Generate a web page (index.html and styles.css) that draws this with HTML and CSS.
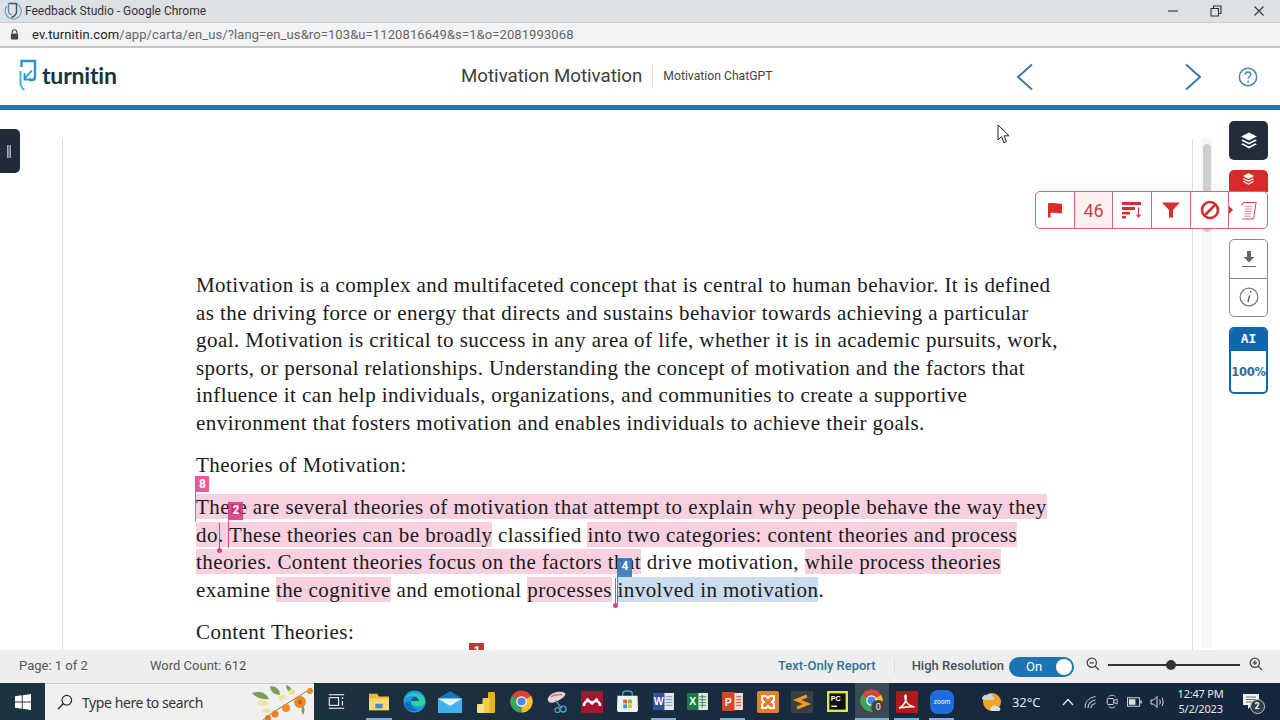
FILE: index.html
```html
<!DOCTYPE html>
<html lang="en">
<head>
<meta charset="utf-8">
<title>Feedback Studio - Google Chrome</title>
<link rel="stylesheet" href="styles.css">
</head>
<body>
<svg class="defs" width="0" height="0" aria-hidden="true">
  <symbol id="layers" viewBox="0 0 16 16">
    <path d="M8 .8 15 4.4 8 8 1 4.4Z" fill="currentColor"/>
    <path d="M2.6 7 8 9.9 13.4 7 15 7.9 8 11.5 1 7.9Z" fill="currentColor"/>
    <path d="M2.6 10.5 8 13.4 13.4 10.5 15 11.4 8 15 1 11.4Z" fill="currentColor"/>
  </symbol>
  <symbol id="chrome" viewBox="0 0 24 24">
    <circle cx="12" cy="12" r="11.5" fill="#db4437"/>
    <path d="M12 12 22 6.2A11.5 11.5 0 0 1 12 23.5Z" fill="#fbc02d"/>
    <path d="M12 12 12 23.5A11.5 11.5 0 0 1 2 6.2Z" fill="#3aa757"/>
    <circle cx="12" cy="12" r="5.6" fill="#fff"/>
    <circle cx="12" cy="12" r="4.3" fill="#4a8af0"/>
  </symbol>
</svg>

<header class="titlebar">
  <svg class="favicon" viewBox="0 0 18 18" width="18" height="18"><path d="M12 1.500A8 8 0 1 1 3 4" fill="none" stroke="#6e9cc0" stroke-width="1.200"/><path d="M4.500 1.500h8v8c0 3.500-2.500 5-5 6" fill="none" stroke="#2f5877" stroke-width="1.400"/><path d="M4.500 1.500v7c0 2.500 1.500 4 3.500 4" fill="none" stroke="#5f87a6" stroke-width="1.200"/></svg>
  <span class="titlebar-text">Feedback Studio - Google Chrome</span>
  <div class="window-controls">
    <span class="win-btn"><svg viewBox="0 0 12 12" width="12" height="12"><path d="M1 6h10" stroke="#333" stroke-width="1.100"/></svg></span>
    <span class="win-btn"><svg viewBox="0 0 12 12" width="12" height="12"><path d="M1 3.500h7.500V11H1ZM3.500 3.500V1H11v7.500H8.500" fill="none" stroke="#333" stroke-width="1.100"/></svg></span>
    <span class="win-btn"><svg viewBox="0 0 12 12" width="12" height="12"><path d="M1.500 1.500l9 9M10.500 1.500l-9 9" stroke="#333" stroke-width="1.100"/></svg></span>
  </div>
</header>

<div class="addressbar">
  <svg class="lock" viewBox="0 0 10 12" width="9" height="11"><path d="M2.400 5V3.300a2.600 2.600 0 0 1 5.200 0V5" fill="none" stroke="#444" stroke-width="1.200"/><rect x="1" y="5" width="8" height="6.500" rx="1" fill="#444"/></svg>
  <span class="url"><span class="url-host">ev.turnitin.com</span>/app/carta/en_us/?lang=en_us&amp;ro=103&amp;u=1120816649&amp;s=1&amp;o=2081993068</span>
</div>

<nav class="apphead">
  <div class="logo">
    <svg viewBox="0 0 20 32" width="20" height="32"><path d="M3.500 8V2h13.500v16c0 2-1 3-3 3H11" fill="none" stroke="#2a95d0" stroke-width="2.400"/><path d="M14 11.500 6.500 19.500M6.500 14V20.500H13" fill="none" stroke="#2a95d0" stroke-width="1.800"/><path d="M2.500 12V24c0 3 1.500 5.500 4 7" fill="none" stroke="#3fa7dc" stroke-width="1.800"/></svg>
    <span class="logo-word">turnitin</span>
  </div>
  <div class="doc-title">Motivation Motivation</div>
  <div class="doc-sub">Motivation ChatGPT</div>
  <div class="nav-actions">
    <svg class="chev" viewBox="0 0 18 28" width="18" height="28"><path d="M16 1.500 2 14l14 12.500" fill="none" stroke="#3f78a6" stroke-width="2"/></svg>
    <svg class="chev chev-next" viewBox="0 0 18 28" width="18" height="28"><path d="M2 1.500 16 14 2 26.500" fill="none" stroke="#3f78a6" stroke-width="2"/></svg>
    <svg class="help" viewBox="0 0 20 20" width="20" height="20"><circle cx="10" cy="10" r="8.700" fill="none" stroke="#4f83ad" stroke-width="1.500"/><path d="M7.300 7.800c0-1.700 1.200-2.700 2.800-2.700s2.700 1 2.700 2.400c0 2-2.700 2-2.700 4.200" fill="none" stroke="#4f83ad" stroke-width="1.500"/><circle cx="10.100" cy="14.600" r="1" fill="#4f83ad"/></svg>
  </div>
</nav>
<div class="accent"></div>

<main class="workspace">
  <div class="drawer-handle"><span class="grip"></span></div>

  <article class="page">
    <div class="para">
      <div class="line">Motivation is a complex and multifaceted concept that is central to human behavior. It is defined</div>
      <div class="line">as the driving force or energy that directs and sustains behavior towards achieving a particular</div>
      <div class="line">goal. Motivation is critical to success in any area of life, whether it is in academic pursuits, work,</div>
      <div class="line">sports, or personal relationships. Understanding the concept of motivation and the factors that</div>
      <div class="line">influence it can help individuals, organizations, and communities to create a supportive</div>
      <div class="line">environment that fosters motivation and enables individuals to achieve their goals.</div>
    </div>
    <div class="para"><div class="line">Theories of Motivation:</div></div>
    <div class="para marked">
      <div class="line"><span class="hl">There are several theories of motivation that attempt to explain why people behave the way they</span></div>
      <div class="line"><span class="hl">do. These theories can be broadly</span> classified <span class="hl">into two categories: content theories and process</span></div>
      <div class="line"><span class="hl">theories. Content theories focus on the factors that</span> drive motivation, <span class="hl">while process theories</span></div>
      <div class="line">examine <span class="hl">the cognitive</span> and emotional <span class="hl">processes</span> <span class="hl hl-blue">involved in motivation</span>.</div>

      <span class="flag flag-8">8</span>
      <span class="flag flag-2">2</span>
      <span class="flag flag-4">4</span>
      <span class="pin pin-do"></span>
      <span class="pin pin-proc"></span>
    </div>
    <div class="para marked">
      <div class="line">Content Theories:</div>
      <span class="flag flag-1">1</span>
    </div>
  </article>

  <div class="scroll-track"><div class="scroll-thumb"></div></div>

  <aside class="rail">
    <div class="rail-btn rail-dark"><svg width="18" height="19"><use href="#layers"/></svg></div>
    <div class="rail-cap"><svg width="13" height="14"><use href="#layers"/></svg></div>
    <div class="rail-group">
      <div class="rail-cell">
        <svg viewBox="0 0 16 18" width="16" height="18"><path d="M6 1h4v6h3.500L8 12.500 2.500 7H6Z" fill="#666"/><path d="M1 16.500h14" stroke="#666" stroke-width="1"/></svg>
      </div>
      <div class="rail-cell">
        <svg viewBox="0 0 20 20" width="20" height="20"><circle cx="10" cy="10" r="8.900" fill="none" stroke="#777" stroke-width="1.200"/><path d="M11 4.800h1.300M10.600 8.300 9 15" stroke="#666" stroke-width="1.500" fill="none"/></svg>
      </div>
    </div>
    <div class="ai-card">
      <div class="ai-top">AI</div>
      <div class="ai-score">100%</div>
    </div>
  </aside>

  <div class="toolbar">
    <div class="tool">
      <svg viewBox="0 0 16 16" width="16" height="16"><path d="M1 1.500c4-1.500 9 1 14 0v9.500c-4 1-8-1-11.500 0V15.500H1Z" fill="#dd2c2c"/></svg>
    </div>
    <div class="tool tool-count">46</div>
    <div class="tool">
      <svg viewBox="0 0 20 18" width="20" height="18"><path d="M0 1h19v3H0ZM0 6h13v3H0ZM0 11h8v2.500H0ZM0 15h4v2.500H0Z" fill="#dd2c2c"/><path d="M16.500 6.500v9.500M14.500 13.500l2 2.500 2-2.500" fill="none" stroke="#dd2c2c" stroke-width="1.200"/></svg>
    </div>
    <div class="tool">
      <svg viewBox="0 0 18 16" width="18" height="16"><path d="M0 .5h18L11 8v7.500H7V8Z" fill="#dd2c2c"/></svg>
    </div>
    <div class="tool">
      <svg viewBox="0 0 20 20" width="20" height="20"><circle cx="10" cy="10" r="8" fill="none" stroke="#cf2f32" stroke-width="2.600"/><path d="M4.500 15.500 15.500 4.500" stroke="#cf2f32" stroke-width="2.600"/></svg>
    </div>
    <div class="tool tool-doc">
      <span class="tool-caret"></span>
      <svg viewBox="0 0 18 20" width="17" height="19"><path d="M1.500 4 4 1.500h13l-2.500 16.500-1.500 1H2.500" fill="none" stroke="#c9494f" stroke-width="1.100"/><path d="M5 6h8M5 8.500h8M4.500 11h8M4.500 13.500h7.500M4 16h7" stroke="#d0878a" stroke-width="1" fill="none"/></svg>
    </div>
  </div>

  <svg class="mouse" viewBox="0 0 13 20" width="13" height="20"><path d="M1 1v15l3.600-3.400 2.400 6 2.600-1-2.500-5.800h5Z" fill="#fff" stroke="#222" stroke-width="1"/></svg>
</main>

<footer class="statusbar">
  <span class="stat stat-page">Page: 1 of 2</span>
  <span class="stat">Word Count: 612</span>
  <div class="status-right">
    <span class="report-link">Text-Only Report</span>
    <span class="status-sep"></span>
    <span class="hires">High Resolution</span>
    <span class="toggle"><span class="toggle-label">On</span><span class="toggle-knob"></span></span>
    <svg class="zoom-icon zoom-out" viewBox="0 0 14 14" width="14" height="14"><circle cx="5.800" cy="5.800" r="4.600" fill="none" stroke="#444" stroke-width="1.300"/><path d="M3.600 5.800h4.400M9.200 9.200l3.800 3.800" stroke="#444" stroke-width="1.300"/></svg>
    <span class="slider"><span class="slider-knob"></span></span>
    <svg class="zoom-icon" viewBox="0 0 14 14" width="14" height="14"><circle cx="5.800" cy="5.800" r="4.600" fill="none" stroke="#444" stroke-width="1.300"/><path d="M3.600 5.800h4.400M5.800 3.600v4.400M9.200 9.200l3.800 3.800" stroke="#444" stroke-width="1.300"/></svg>
  </div>
</footer>

<div class="taskbar">
  <div class="start">
    <svg viewBox="0 0 16 16" width="16" height="16"><path d="M0 2.300 6.800 1.300V7.600H0ZM7.700 1.200 16 0V7.600H7.700ZM0 8.400H6.800V14.700L0 13.700ZM7.700 8.400H16V16L7.700 14.800Z" fill="#fff"/></svg>
  </div>
  <div class="search">
    <svg viewBox="0 0 16 16" width="16" height="16"><circle cx="9.800" cy="6.200" r="4.800" fill="none" stroke="#222" stroke-width="1.200"/><path d="M6.300 9.700 1 15" stroke="#222" stroke-width="1.300"/></svg>
    <span class="search-text">Type here to search</span>
    <svg class="flowers" viewBox="0 0 64 37" width="64" height="37">
      <path d="M12 37C22 28 40 18 62 4" fill="none" stroke="#8a7b3a" stroke-width="1"/>
      <path d="M2 9c8-3 14 0 17 6-7 1-13-1-17-6ZM20 2c7 0 10 4 10 9-6 0-10-4-10-9ZM36 1c4 1 6 4 6 7-5 0-6-4-6-7ZM53 21c2 3 2 7 0 10-2-3-2-7 0-10Z" fill="#7d9f58"/>
      <path d="M6 18c5-3 11-2 13 2-4 3-10 2-13-2ZM12 27c3-3 7-3 9-1-2 4-6 4-9 1ZM28 12l7-2 1 5-6 2Z" fill="#eee3a0"/>
      <circle cx="50" cy="18" r="6" fill="#ee8a2c"/><circle cx="36" cy="24" r="4" fill="#ee8a2c"/><circle cx="25" cy="30" r="3.500" fill="#e9812a"/><circle cx="60" cy="7" r="3" fill="#ec8a34"/><circle cx="18" cy="34" r="3" fill="#e07a2c"/>
      <circle cx="42" cy="8" r="3" fill="#eee08a"/><circle cx="50" cy="18" r="2.200" fill="#c8601c"/>
    </svg>
  </div>

  <div class="apps">
    <span class="app app-task"><svg viewBox="0 0 20 20" width="17" height="17"><path d="M1 2h18M1 18h18" stroke="#fff" stroke-width="1.300"/><rect x="1.500" y="5.500" width="11" height="9" fill="none" stroke="#fff" stroke-width="1.200"/><path d="M17 5v2M17 9.500v5" stroke="#fff" stroke-width="1.500"/></svg></span>
    <span class="app app-open"><svg viewBox="0 0 24 22" width="22" height="20"><path d="M1 2h9l2 3h11v15H1Z" fill="#eeb92f"/><path d="M1 7h22v13H1Z" fill="#f7d774"/><rect x="8" y="13" width="8" height="5" fill="#4b86c4"/></svg></span>
    <span class="app"><svg viewBox="0 0 24 24" width="23" height="23"><circle cx="12" cy="12" r="11.500" fill="#1b9de2"/><path d="M23.500 13C23 7 18 3 12 3 5 3 1 8 .5 13c1-5 5-7 9-7 5 0 7 3 7 5.500H8c0 3.500 3 5.500 7 5.500 3 0 6-1 8-3" fill="#2fd0a0"/><path d="M8 11.500h8.500C16.500 9 14 7 11.500 7 9.500 7 8.500 9.500 8 11.500Z" fill="#0c5aa8"/><path d="M8 12c0 5 4 8 8 8-4 3-11 3-14-3-1-3 2-6 6-5Z" fill="#0f6cbd"/></svg></span>
    <span class="app"><svg viewBox="0 0 24 22" width="24" height="22"><path d="M12 0 24 7.500H0Z" fill="#1676bd"/><path d="M0 7.500h24V22H0Z" fill="#3fb1ee"/><path d="M0 7.500 12 15 24 7.500" fill="#dff3fd"/></svg></span>
    <span class="app"><svg viewBox="0 0 18 22" width="18" height="22"><rect x="11" y="1" width="7" height="21" rx="1" fill="#e9b21c"/><rect x="5.500" y="7" width="7" height="15" rx="1" fill="#f4cc45"/><rect x="0" y="13" width="7" height="9" rx="1" fill="#f9e08c"/></svg></span>
    <span class="app"><svg width="23" height="23"><use href="#chrome"/></svg></span>
    <span class="app"><svg viewBox="0 0 24 24" width="23" height="23"><path d="M3 9C5 3 15 0 21 3c2 3-6 8-12 10C6 14 2 12 3 9Z" fill="#e7d3d8"/><path d="M6 7c4-2 8-3 12-2" stroke="#d06a7d" stroke-width="1.500" fill="none"/><path d="M11 11l6 8" stroke="#5f93ad" stroke-width="1.500"/><circle cx="19" cy="20" r="3" fill="none" stroke="#4f9cc6" stroke-width="1.500"/><circle cx="13" cy="21" r="2.500" fill="none" stroke="#4f9cc6" stroke-width="1.300"/></svg></span>
    <span class="app"><svg viewBox="0 0 22 22" width="22" height="22"><rect width="22" height="22" rx="1.500" fill="#a4162e"/><path d="M3 15c0-3 2-5 4-5s2 1.500 4 1.500S13 10 15 10s4 2 4 5" fill="none" stroke="#fff" stroke-width="2.600"/><circle cx="6.500" cy="9" r="1.800" fill="#fff"/><circle cx="15.500" cy="9" r="1.800" fill="#fff"/><circle cx="11" cy="12" r="1.800" fill="#fff"/></svg></span>
    <span class="app"><svg viewBox="0 0 24 24" width="23" height="23"><path d="M7 6V3.500C7 1.500 9 1 12 1s5 .5 5 2.500V6" fill="none" stroke="#35a0d8" stroke-width="1.500"/><path d="M1.500 6h21L23 20c0 2-1 3-3 3H4c-2 0-3-1-3-3Z" fill="#eef3f5"/><rect x="7.500" y="10" width="4" height="4" fill="#e7572b"/><rect x="12.500" y="10" width="4" height="4" fill="#7fb82a"/><rect x="7.500" y="15" width="4" height="4" fill="#1f9be0"/><rect x="12.500" y="15" width="4" height="4" fill="#fbbc0a"/></svg></span>
    <span class="app app-open"><svg viewBox="0 0 22 20" width="21" height="19"><rect x="9" y="1" width="13" height="18" fill="#dfe7f2"/><path d="M13 5h7M13 8h7M13 11h7M13 14h7" stroke="#7c94bb" stroke-width="1"/><rect x="0" y="1" width="12" height="18" fill="#2b579a"/><text class="app-letter" x="6" y="14">W</text></svg></span>
    <span class="app"><svg viewBox="0 0 22 20" width="21" height="19"><rect x="9" y="1" width="13" height="18" fill="#dcece2"/><path d="M13 5h7M13 8h7M13 11h7M13 14h7M16 3v14" stroke="#3d8a5f" stroke-width="1"/><rect x="0" y="1" width="12" height="18" fill="#1d7a46"/><text class="app-letter" x="6" y="14">X</text></svg></span>
    <span class="app app-open"><svg viewBox="0 0 22 20" width="21" height="19"><rect x="9" y="1" width="13" height="18" fill="#f7dcd4"/><path d="M15 5h5M15 8h5M15 11h5M15 14h5" stroke="#c9472a" stroke-width="1"/><rect x="0" y="0" width="13" height="20" fill="#d24726"/><text class="app-letter" x="6.500" y="14.500">P</text></svg></span>
    <span class="app"><svg viewBox="0 0 22 22" width="22" height="22"><rect width="22" height="22" rx="2" fill="#e0812f"/><path d="M5 5h4l2 2 2-2h4v4l-2 2 2 2v4h-4l-2-2-2 2H5v-4l2-2-2-2Z" fill="none" stroke="#fff" stroke-width="2"/></svg></span>
    <span class="app"><svg viewBox="0 0 22 22" width="22" height="22"><rect width="22" height="22" rx="1" fill="#3c3f41"/><path d="M16 5 6 9l10 4-10 4" fill="none" stroke="#f29a1f" stroke-width="3"/></svg></span>
    <span class="app"><svg viewBox="0 0 22 22" width="21" height="21"><rect width="22" height="22" fill="#d6e84a"/><rect x="2.500" y="2.500" width="17" height="17" fill="#111"/><text class="pc-letter" x="4" y="10.500">PC</text><path d="M4.500 16h6" stroke="#fff" stroke-width="1.500"/></svg></span>
    <span class="app app-active"><svg width="23" height="23"><use href="#chrome"/></svg><span class="app-count">0</span></span>
    <span class="app app-open"><svg viewBox="0 0 22 22" width="22" height="22"><rect width="22" height="22" rx="1" fill="#b01a1a"/><path d="M3 17c3-1 6-5 7-9 .4-2 .2-4-.5-4s-1 2 0 5c1 3 4 6 9 7-3-.5-9 0-15.500 1Z" fill="none" stroke="#fff" stroke-width="1.400"/></svg></span>
    <span class="app app-open"><svg viewBox="0 0 24 24" width="24" height="24"><rect width="24" height="24" rx="8" fill="#1f6ce0"/><text class="zoom-letter" x="12" y="14">zoom</text></svg></span>
  </div>

  <div class="tray">
    <svg class="weather" viewBox="0 0 24 24" width="24" height="24"><circle cx="12" cy="12" r="9" fill="#f2a227"/><path d="M2 9c0-3 3-5 5.500-4C9 3 13 3.500 13 7c2 .5 2 3 0 3H3Z" fill="#c9d6e2"/><path d="M12 21c-2 0-2.500-3-.5-3.500C12 15 16 15 17 17c2.500-1 5 3 2 4Z" fill="#d7e2ec"/></svg>
    <span class="temp">32°C</span>
    <svg class="tray-chev" viewBox="0 0 12 8" width="12" height="8"><path d="M1 7 6 1.500 11 7" fill="none" stroke="#eee" stroke-width="1.200"/></svg>
    <svg class="tray-icon" viewBox="0 0 14 14" width="14" height="14"><path d="M2 13C2 7 6 2.500 12.500 1.500M5 13c0-4 3-7 7.500-8M8 13c0-2 2-4 4.500-4.500" fill="none" stroke="#ccc" stroke-width="1.100"/></svg>
    <svg class="tray-icon" viewBox="0 0 14 18" width="12" height="17"><path d="M3 3.500C5 1 9 1 11 3.500M3 14.500c2 2.500 6 2.500 8 0" fill="none" stroke="#ddd" stroke-width="1"/><rect x="1.500" y="5.500" width="7.500" height="7" rx="1" fill="none" stroke="#ddd" stroke-width="1.100"/><path d="M9 8l4-2v6l-4-2" fill="none" stroke="#ddd" stroke-width="1"/></svg>
    <svg class="tray-icon" viewBox="0 0 16 10" width="15" height="10"><rect x=".5" y=".5" width="13" height="9" fill="none" stroke="#ddd"/><rect x="2" y="2" width="7" height="6" fill="#ddd"/><path d="M15 3.500v3" stroke="#ddd" stroke-width="1.500"/></svg>
    <svg class="tray-icon tray-vol" viewBox="0 0 16 14" width="16" height="14"><path d="M1 5h2.500L7 1.500v11L3.500 9H1Z" fill="none" stroke="#ddd"/><path d="M9.500 4.500c1 1.500 1 3.500 0 5M12 3c1.500 2.500 1.500 5.500 0 8" fill="none" stroke="#ddd"/></svg>
    <div class="clock"><span>12:47 PM</span><span>5/2/2023</span></div>
    <span class="notify">
      <svg viewBox="0 0 16 16" width="16" height="16"><path d="M0 0h16v11H9l-4 4v-4H0Z" fill="#f1f1f1"/><path d="M3 3h10M3 5.500h10M3 8h6" stroke="#777" stroke-width="1"/></svg>
      <span class="notify-badge">2</span>
    </span>
  </div>
</div>
</body>
</html>
```
FILE: styles.css
```css
* { box-sizing: border-box; }
html, body { margin: 0; height: 100%; overflow: hidden; }
body {
  width: 1280px;
  height: 720px;
  display: flex;
  flex-direction: column;
  background: #fff;
  font-family: "Roboto", "Liberation Sans", sans-serif;
}
.defs { position: absolute; }

/* window chrome */
.titlebar {
  height: 22px;
  flex: none;
  display: flex;
  align-items: center;
  padding-left: 4px;
  background: #dee1e4;
}
.favicon { flex: none; }
.titlebar-text {
  margin-left: 3px;
  font: 12px "Roboto", "Open Sans", sans-serif;
  color: #333;
}
.window-controls { margin-left: auto; display: flex; }
.win-btn { width: 43px; display: flex; justify-content: center; align-items: center; }
.addressbar {
  height: 26px;
  flex: none;
  display: flex;
  align-items: center;
  padding-left: 10px;
  background: #f1f3f4;
  border-top: 1px solid #c9cbce;
  border-bottom: 2px solid #c3c5c7;
}
.url {
  margin-left: 13px;
  font: 13px "Roboto", sans-serif;
  color: #666;
  letter-spacing: .1px;
}
.url-host { color: #222; }

/* app header */
.apphead {
  height: 57px;
  flex: none;
  display: flex;
  align-items: center;
  padding-left: 18px;
  background: #fff;
}
.logo { width: 100px; display: flex; align-items: center; gap: 4px; margin-top: -3px; }
.logo-word {
  font: 700 23px "Lato", sans-serif;
  color: #16333f;
  letter-spacing: -.2px;
}
.doc-title {
  margin: 0 0 2px 343px;
  font-size: 18.700px;
  color: #3a3f44;
  padding-right: 10px;
  border-right: 1px solid #ddd;
  line-height: 22px;
}
.doc-sub { margin: 0 0 2px 10px; font-size: 12.200px; color: #444; }
.nav-actions { margin-left: auto; display: flex; align-items: center; padding-right: 22px; }
.chev-next { margin-left: 150px; }
.help { margin-left: 36px; }
.accent { height: 5px; flex: none; background: #2a76ae; }

/* workspace */
.workspace {
  position: relative;
  height: 540px;
  flex: none;
  display: flex;
  align-items: flex-start;
  padding-left: 62px;
  overflow: hidden;
  background: #fff;
}
.drawer-handle {
  position: absolute;
  left: 0;
  top: 19px;
  width: 20px;
  height: 44px;
  display: flex;
  align-items: center;
  padding-left: 7px;
  background: #212b38;
  border-radius: 0 5px 5px 0;
}
.grip {
  width: 4px;
  height: 13px;
  border-left: 1px solid #aab;
  border-right: 1px solid #aab;
  background: #778;
}
.page {
  width: 1131px;
  height: 540px;
  flex: none;
  margin-top: 29px;
  padding: 133px 0 0 133px;
  border-left: 1px solid #dedede;
  border-right: 1px solid #dedede;
  font: 21px/27.500px "Liberation Serif", "Times New Roman", serif;
  color: #1a1a1a;
}
.para { margin-bottom: 14.750px; }
.marked { position: relative; }
.line { white-space: nowrap; letter-spacing: .44px; }
.hl { background: #f8d0e0; padding: 1px 0 0; }
.hl-blue { background: #cadced; }

.flag {
  position: absolute;
  width: 14px;
  color: #fff;
  font: 700 12px/17px "Roboto", sans-serif;
  text-align: center;
}
.flag::before {
  content: "";
  position: absolute;
  left: -1px;
  top: 0;
  width: 1px;
  height: 46px;
  background: inherit;
}
.flag-8 { left: 0; top: -18px; height: 16px; width: 13px; background: rgba(232, 72, 140, .9); }
.flag-2 { left: 33px; top: 8px; height: 18px; background: rgba(217, 50, 124, .85); }
.flag-4 { left: 422px; top: 64px; height: 19px; background: rgba(52, 120, 186, .9); }
.flag-1 { left: 274px; top: 24px; height: 18px; background: #c73434; }
.pin {
  position: absolute;
  width: 1px;
  height: 27px;
  background: #d8457f;
}
.pin::after {
  content: "";
  position: absolute;
  left: -2px;
  bottom: -3px;
  width: 5px;
  height: 5px;
  border-radius: 50%;
  background: #d8457f;
}
.pin-do { left: 23px; top: 29px; }
.pin-proc { left: 419px; top: 84px; }

.scroll-track {
  width: 11px;
  height: 510px;
  flex: none;
  margin: 29px 0 0 8px;
  padding: 5px 1px 0 2px;
  background: #f7f7f7;
}
.scroll-thumb { height: 88px; background: #cfcfcf; border-radius: 4px; }

.rail {
  width: 39px;
  flex: none;
  margin: 11px 0 0 17px;
  display: flex;
  flex-direction: column;
}
.rail-btn { display: flex; align-items: center; justify-content: center; }
.rail-dark {
  height: 39px;
  color: #fff;
  background: #222c3b;
  border-radius: 5px;
}
.rail-cap {
  height: 22px;
  margin-top: 10px;
  margin-bottom: 47px;
  padding-bottom: 4px;
  display: flex;
  align-items: center;
  justify-content: center;
  color: #fff;
  background: #d92a2a;
  border-radius: 5px 5px 0 0;
}
.rail-group {
  height: 78px;
  margin-bottom: 10px;
  border: 1px solid #8a8a8a;
  border-radius: 5px;
  display: flex;
  flex-direction: column;
  background: #fff;
}
.rail-cell { flex: 1; display: flex; align-items: center; justify-content: center; }
.rail-cell + .rail-cell { border-top: 1px solid #8a8a8a; }
.ai-card {
  height: 67px;
  border: 2px solid #1566aa;
  border-radius: 5px;
  overflow: hidden;
  background: #fff;
}
.ai-top {
  height: 22px;
  background: #0f66b0;
  color: #fff;
  text-align: center;
  font: 700 13px/19px "DejaVu Sans Mono", monospace;
}
.ai-score {
  height: 41px;
  display: flex;
  align-items: center;
  justify-content: center;
  font: 700 11.500px "DejaVu Sans", sans-serif;
  letter-spacing: -.2px;
  color: #2a6a9e;
  white-space: nowrap;
}

.toolbar {
  position: absolute;
  left: 1035px;
  top: 81px;
  width: 233px;
  height: 38px;
  display: flex;
  border: 1px solid #d9666c;
  border-radius: 5px;
  background: #fff;
}
.tool {
  flex: 1;
  position: relative;
  display: flex;
  align-items: center;
  justify-content: center;
}
.tool + .tool { border-left: 1px solid #d9666c; }
.tool-count { background: #fdf0ef; color: #c04449; font-size: 18px; }
.tool-caret {
  position: absolute;
  left: 0;
  top: 14px;
  border-left: 4px solid #c0392b;
  border-top: 4px solid transparent;
  border-bottom: 4px solid transparent;
}
.mouse { position: absolute; left: 997px; top: 14px; }

/* status */
.statusbar {
  height: 33px;
  flex: none;
  display: flex;
  align-items: center;
  padding: 0 0 2px 19px;
  background: #eeeeee;
  font-size: 13px;
  color: #555;
}
.stat-page { width: 131px; }
.status-right { margin-left: auto; display: flex; align-items: center; padding-right: 17px; }
.report-link { font-weight: 500; color: #2f7199; }
.status-sep { width: 1px; height: 16px; margin: 0 17px 0 18px; background: #ddd; }
.hires { font-weight: 500; color: #4a4f55; }
.toggle {
  width: 65px;
  height: 20px;
  margin: 2px 0 0 5px;
  padding: 0 2px 0 17px;
  display: flex;
  align-items: center;
  justify-content: space-between;
  border-radius: 10px;
  background: #1b75b5;
  color: #fff;
  font-size: 13px;
}
.toggle-knob { width: 16px; height: 16px; border-radius: 50%; background: #fff; }
.zoom-out { margin-left: 12px; }
.slider {
  position: relative;
  width: 132px;
  height: 2px;
  margin: -2px 9px 0 8px;
  background: #333;
}
.slider-knob {
  position: absolute;
  left: 58px;
  top: -4px;
  width: 10px;
  height: 10px;
  border-radius: 50%;
  background: #333;
}
.zoom-icon { margin-top: -3px; }

/* taskbar */
.taskbar {
  height: 37px;
  flex: none;
  display: flex;
  align-items: stretch;
  background: linear-gradient(90deg, #1d3340, #15263c);
}
.start { width: 45px; display: flex; align-items: center; justify-content: center; background: #1d3340; }
.search {
  width: 269px;
  display: flex;
  align-items: center;
  padding-left: 12px;
  background: #f0f0f0;
  border-top: 1px solid #ccc;
  overflow: hidden;
}
.search-text { margin-left: 9px; font: 14px "Noto Sans", "Open Sans", sans-serif; color: #333; letter-spacing: -.42px; white-space: nowrap; }
.flowers { margin-left: auto; flex: none; }
.apps { margin-left: 5px; display: flex; }
.app {
  position: relative;
  width: 35.600px;
  display: flex;
  align-items: center;
  justify-content: center;
}
.app-task { width: 42px; justify-content: flex-start; padding-left: 9px; }
.app:nth-child(n+10) { width: 34.800px; }
.app-open::after {
  content: "";
  position: absolute;
  left: 5px;
  right: 5px;
  bottom: 0;
  height: 2px;
  background: #7fb0dc;
}
.app-active { background: #3c4a55; border-bottom: 2px solid #7fb0dc; }
.app-count {
  position: absolute;
  right: 4px;
  bottom: 4px;
  width: 14px;
  height: 14px;
  border-radius: 50%;
  background: #444;
  color: #fff;
  font: 9px/14px "Roboto", sans-serif;
  text-align: center;
}
.app-letter { font: 700 11px "Liberation Sans", sans-serif; fill: #fff; text-anchor: middle; }
.pc-letter { font: 700 7.500px "Liberation Sans", sans-serif; fill: #fff; }
.zoom-letter { font: 6.500px "Roboto", sans-serif; fill: #fff; text-anchor: middle; }
.tray {
  flex: 1;
  display: flex;
  align-items: center;
  padding-left: 21px;
  color: #e8e8e8;
}
.temp { margin-left: 8px; font: 13px "Noto Sans", sans-serif; }
.tray-chev { margin-left: 21px; }
.tray-icon { margin-left: 9px; }
.tray-vol { margin-left: 8px; }
.clock {
  margin: -2px 0 0 12px;
  display: flex;
  flex-direction: column;
  align-items: center;
  font: 11px/15px "Noto Sans", sans-serif;
  letter-spacing: -.2px;
}
.notify { position: relative; margin-left: 19px; display: flex; }
.notify-badge {
  position: absolute;
  left: 7px;
  top: 5px;
  width: 15px;
  height: 15px;
  border-radius: 50%;
  background: #2b3d4c;
  border: 1px solid #ccc;
  color: #fff;
  font: 700 9px/13px "Roboto", sans-serif;
  text-align: center;
}
```
